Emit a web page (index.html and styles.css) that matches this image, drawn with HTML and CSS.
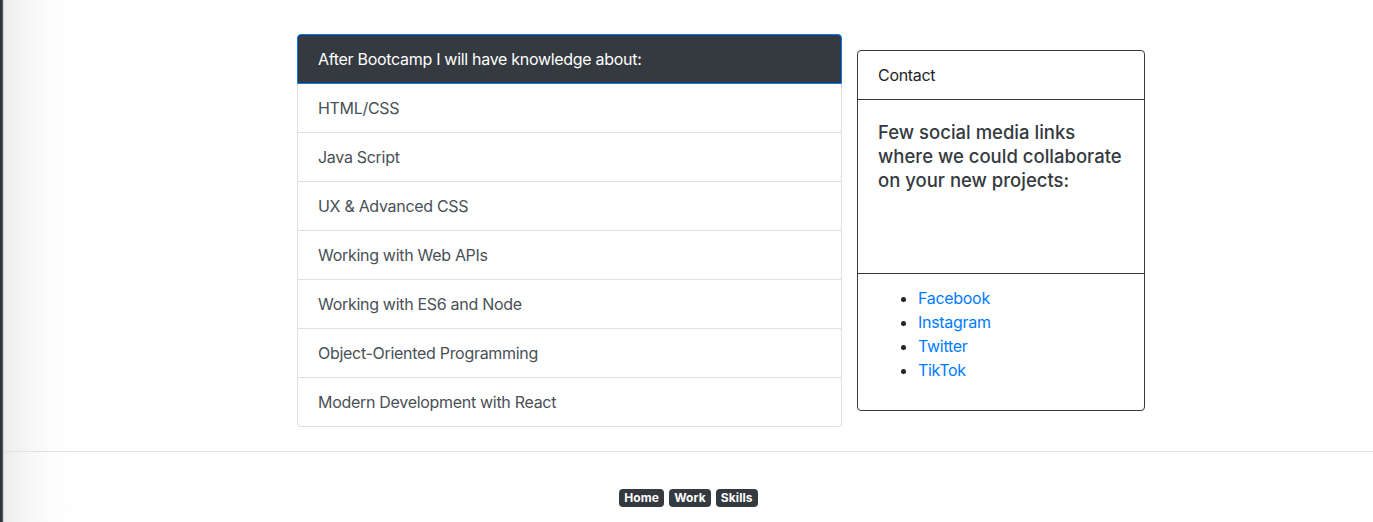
FILE: index.html
```html
<!DOCTYPE html>
<html lang="en">
<head>
<meta charset="utf-8">
<title>Skills</title>
<link rel="stylesheet" href="styles.css">
</head>
<body>
<div class="frame">
  <div class="edge"></div>
  <div class="page">
    <main class="content">
      <ul class="list-group">
        <li class="list-item list-head">After Bootcamp I will have knowledge about:</li>
        <li class="list-item">HTML/CSS</li>
        <li class="list-item">Java Script</li>
        <li class="list-item">UX &amp; Advanced CSS</li>
        <li class="list-item">Working with Web APIs</li>
        <li class="list-item">Working with ES6 and Node</li>
        <li class="list-item">Object-Oriented Programming</li>
        <li class="list-item list-last">Modern Development with React</li>
      </ul>
      <section class="card">
        <div class="card-header">Contact</div>
        <div class="card-body">
          <h5 class="card-title">Few social media links where we could collaborate on your new projects:</h5>
        </div>
        <div class="card-footer">
          <ul class="links">
            <li><a href="#">Facebook</a></li>
            <li><a href="#">Instagram</a></li>
            <li><a href="#">Twitter</a></li>
            <li><a href="#">TikTok</a></li>
          </ul>
        </div>
      </section>
    </main>
    <footer class="footer">
      <hr class="rule">
      <nav class="badges">
        <a class="badge" href="#">Home</a>
        <a class="badge" href="#">Work</a>
        <a class="badge" href="#">Skills</a>
      </nav>
    </footer>
  </div>
</div>
</body>
</html>
```

FILE: styles.css
```css
* { box-sizing: border-box; }
html, body { margin: 0; padding: 0; height: 100%; }
body {
  font-family: Inter, "Noto Sans", "Liberation Sans", sans-serif;
  font-size: 16px;
  line-height: 24px;
  letter-spacing: -0.3px;
  color: #212529;
  background: #fff;
}
.frame {
  display: flex;
  min-height: 522px;
}
.edge {
  width: 4px;
  flex: none;
  background: linear-gradient(to right, #2b323c 0, #2b323c 2px, #5a6069 2px, #5a6069 3px, #c9cbce 3px, #c9cbce 4px);
}
.page {
  flex: 1;
  background: linear-gradient(to right, #ececec 0, #f7f7f7 25px, #fdfdfd 50px, #fff 80px);
}
.content {
  display: flex;
  align-items: flex-start;
  gap: 15px;
  padding-top: 34px;
  padding-left: 293px;
}
.list-group {
  list-style: none;
  margin: 0;
  padding: 0;
  width: 545px;
  flex: none;
}
.list-item {
  padding: 12px 20px;
  background: #fff;
  color: #495057;
  border: 1px solid rgba(0,0,0,.125);
  border-top-width: 0;
}
.list-head {
  background: #343a40;
  color: #fff;
  border: 1px solid #007bff;
  border-radius: 4px 4px 0 0;
}
.list-last {
  border-radius: 0 0 4px 4px;
}
.card {
  width: 288px;
  flex: none;
  margin-top: 16px;
  border: 1px solid #343a40;
  border-radius: 4px;
  background: #fff;
}
.card-header {
  padding: 12px 20px;
  border-bottom: 1px solid #343a40;
}
.card-body {
  padding: 20px;
  height: 173px;
}
.card-title {
  margin: 0;
  font-size: 18.5px;
  font-weight: 500;
  line-height: 24px;
  letter-spacing: 0;
  color: #343a40;
}
.card-footer {
  padding: 12px 20px;
  border-top: 1px solid #343a40;
}
.links {
  margin: 0 0 16px;
  padding-left: 40px;
}
.links a {
  color: #007bff;
  text-decoration: none;
}
.footer {
  padding-top: 24px;
}
.rule {
  margin: 0;
  border: 0;
  border-top: 1px solid #e2e2e2;
}
.badges {
  display: flex;
  justify-content: center;
  gap: 5px;
  margin-top: 37px;
}
.badge {
  display: inline-block;
  padding: 3px 5px;
  font-size: 12px;
  font-weight: 700;
  line-height: 12px;
  letter-spacing: 0.1px;
  color: #fff;
  background: #343a40;
  border-radius: 4px;
  text-decoration: none;
}
```
